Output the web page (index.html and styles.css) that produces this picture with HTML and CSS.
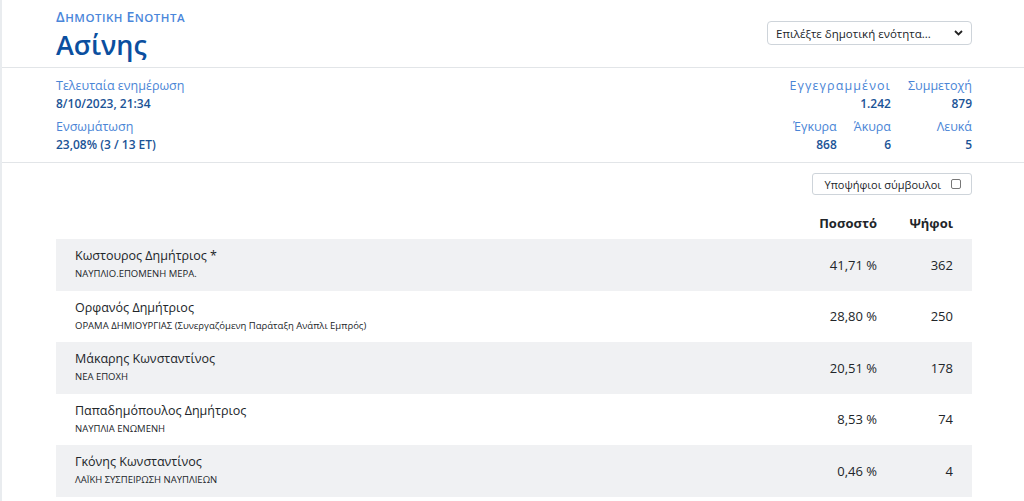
FILE: index.html
```html
<!DOCTYPE html>
<html lang="el">
<head>
    <meta charset="UTF-8">
    <meta name="viewport" content="width=device-width, initial-scale=1.0">
    <title>Ασίνης - Αποτελέσματα</title>
    <link rel="stylesheet" href="styles.css">
</head>
<body>
    <div class="page">
        <div class="header">
            <div class="container header-inner">
                <div>
                    <div class="subtitle"><span class="cap">Δ</span>ημοτικη <span class="cap">Ε</span>νοτητα</div>
                    <h1 class="title">Ασίνης</h1>
                </div>
                <div class="select">
                    <span>Επιλέξτε δημοτική ενότητα...</span>
                    <svg width="9" height="6" viewBox="0 0 9 6"><path d="M1 1l3.5 3.5L8 1" fill="none" stroke="#222" stroke-width="1.8"/></svg>
                </div>
            </div>
        </div>

        <div class="info">
            <div class="container info-inner">
                <div class="info-left">
                    <div class="stat">
                        <div class="label">Τελευταία ενημέρωση</div>
                        <div class="value">8/10/2023, 21:34</div>
                    </div>
                    <div class="stat">
                        <div class="label">Ενσωμάτωση</div>
                        <div class="value">23,08% (3 / 13 ΕΤ)</div>
                    </div>
                </div>
                <div class="info-right">
                    <div class="stat-row top">
                        <div class="stat">
                            <div class="label wide">Εγγεγραμμένοι</div>
                            <div class="value">1.242</div>
                        </div>
                        <div class="stat">
                            <div class="label">Συμμετοχή</div>
                            <div class="value">879</div>
                        </div>
                    </div>
                    <div class="stat-row bottom">
                        <div class="stat">
                            <div class="label">Έγκυρα</div>
                            <div class="value">868</div>
                        </div>
                        <div class="stat">
                            <div class="label">Άκυρα</div>
                            <div class="value">6</div>
                        </div>
                        <div class="stat">
                            <div class="label">Λευκά</div>
                            <div class="value">5</div>
                        </div>
                    </div>
                </div>
            </div>
        </div>

        <div class="container results">
            <div class="toolbar">
                <label class="toggle">
                    <span>Υποψήφιοι σύμβουλοι</span>
                    <span class="box"></span>
                </label>
            </div>

            <div class="table-head">
                <div class="col-name"></div>
                <div class="col-pct">Ποσοστό</div>
                <div class="col-votes">Ψήφοι</div>
            </div>

            <div class="row">
                <div class="col-name">
                    <div class="name">Κωστουρος Δημήτριος *</div>
                    <div class="party">ΝΑΥΠΛΙΟ.ΕΠΟΜΕΝΗ ΜΕΡΑ.</div>
                </div>
                <div class="col-pct">41,71 %</div>
                <div class="col-votes">362</div>
            </div>
            <div class="row">
                <div class="col-name">
                    <div class="name">Ορφανός Δημήτριος</div>
                    <div class="party">ΟΡΑΜΑ ΔΗΜΙΟΥΡΓΙΑΣ (Συνεργαζόμενη Παράταξη Ανάπλι Εμπρός)</div>
                </div>
                <div class="col-pct">28,80 %</div>
                <div class="col-votes">250</div>
            </div>
            <div class="row">
                <div class="col-name">
                    <div class="name">Μάκαρης Κωνσταντίνος</div>
                    <div class="party">ΝΕΑ ΕΠΟΧΗ</div>
                </div>
                <div class="col-pct">20,51 %</div>
                <div class="col-votes">178</div>
            </div>
            <div class="row">
                <div class="col-name">
                    <div class="name">Παπαδημόπουλος Δημήτριος</div>
                    <div class="party">ΝΑΥΠΛΙΑ ΕΝΩΜΕΝΗ</div>
                </div>
                <div class="col-pct">8,53 %</div>
                <div class="col-votes">74</div>
            </div>
            <div class="row">
                <div class="col-name">
                    <div class="name">Γκόνης Κωνσταντίνος</div>
                    <div class="party">ΛΑΪΚΗ ΣΥΣΠΕΙΡΩΣΗ ΝΑΥΠΛΙΕΩΝ</div>
                </div>
                <div class="col-pct">0,46 %</div>
                <div class="col-votes">4</div>
            </div>
        </div>
    </div>
</body>
</html>
```

FILE: styles.css
```css
* {
    margin: 0;
    padding: 0;
    box-sizing: border-box;
}

body {
    font-family: "Open Sans", "Noto Sans", sans-serif;
    background: #fff;
    color: #212529;
    font-size: 13px;
}

.page {
    border-left: 2px solid #e9ecef;
    min-height: 100vh;
}

.container {
    width: 916px;
    margin: 0 0 0 54px;
}

.header {
    border-bottom: 1px solid #e2e5e8;
    height: 68px;
}

.header-inner {
    display: flex;
    justify-content: space-between;
    align-items: flex-start;
    padding-top: 8px;
}

.subtitle {
    text-transform: uppercase;
    font-size: 11.5px;
    font-weight: 600;
    letter-spacing: 0.5px;
    color: #4a86da;
    line-height: 18px;
}

.subtitle .cap {
    font-size: 14px;
}

.title {
    font-size: 27px;
    font-weight: 600;
    color: #0b4f9f;
    line-height: 36px;
}

.select {
    margin-top: 13px;
    width: 205px;
    height: 24px;
    border: 1px solid #ced4da;
    border-radius: 4px;
    display: flex;
    align-items: center;
    justify-content: space-between;
    padding: 0 8px 0 8px;
    font-size: 11.5px;
    color: #212529;
}

.info {
    border-bottom: 1px solid #e2e5e8;
    height: 95px;
}

.info-inner {
    display: flex;
    justify-content: space-between;
    padding-top: 9px;
}

.info-left .stat {
    margin-bottom: 6px;
}

.label {
    color: #4a85d6;
    font-size: 12.5px;
    line-height: 18px;
}

.label.wide {
    letter-spacing: 1.1px;
}

.value {
    color: #1b5396;
    font-weight: 600;
    font-size: 12px;
    line-height: 17px;
}

.info-right {
    display: flex;
    flex-direction: column;
    align-items: flex-end;
}

.stat-row {
    display: flex;
    gap: 17px;
    text-align: right;
    margin-bottom: 6px;
}

.stat-row .stat:last-child {
    min-width: 64px;
}

.results {
    padding-top: 10px;
}

.toolbar {
    display: flex;
    justify-content: flex-end;
}

.toggle {
    display: flex;
    align-items: center;
    gap: 10px;
    height: 22px;
    padding: 0 10px 0 12px;
    border: 1px solid #ced4da;
    border-radius: 3px;
    font-size: 11px;
}

.box {
    width: 10px;
    height: 10px;
    border: 1px solid #777;
    border-radius: 2px;
}

.table-head {
    display: flex;
    font-weight: 700;
    font-size: 13px;
    height: 44px;
    align-items: center;
    padding-top: 12px;
}

.row {
    display: flex;
    align-items: center;
    height: 51.5px;
}

.row:nth-child(odd) {
    background: #f0f1f3;
}

.col-name {
    flex: 1;
    padding-left: 19px;
}

.col-pct {
    width: 120px;
    text-align: right;
}

.col-votes {
    width: 95px;
    text-align: right;
    padding-right: 19px;
}

.name {
    font-size: 12.5px;
    line-height: 18px;
    color: #212529;
}

.party {
    font-size: 9.5px;
    line-height: 17px;
    color: #212529;
}
```
